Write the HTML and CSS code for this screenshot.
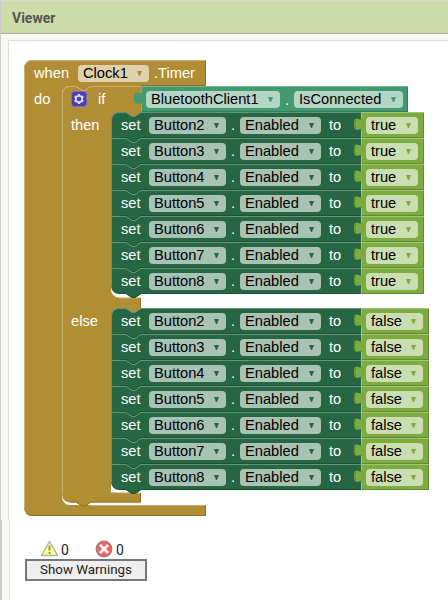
FILE: index.html
```html
<!DOCTYPE html>
<html lang="en">
<head>
<meta charset="utf-8">
<title>Viewer</title>
<link rel="stylesheet" href="styles.css">
</head>
<body>
<main class="viewer">
  <header class="viewer-title">Viewer</header>
  <section class="workspace">
    <div class="event-block">
      <svg class="block-shape" width="182" height="460" viewBox="24 60 182 460">
        <path class="gold" d="M32 60H206V86H91l-6 4h-3l-6-4H70a8 8 0 0 0-8 8V497a8 8 0 0 0 8 8H206V516H32a8 8 0 0 1-8-8V68a8 8 0 0 1 8-8z"/>
        <path class="gold" d="M62 94a8 8 0 0 1 8-8h6l6 4h3l6-4H141V112l-6 4h-3l-6-4h-7a8 8 0 0 0-8 8V284.500a8 8 0 0 0 8 8V297.500H141V308l-6 4h-3l-6-4h-7a8 8 0 0 0-8 8V492.500H141V502.500H91l-6 4h-3l-6-4H70a8 8 0 0 1-8-8z"/>
        <path class="gap" d="M111 284V289.500a8 8 0 0 0 8 8H141V293H119zM111 480V484.500a8 8 0 0 0 8 8H141V489H119z"/>
        <path class="edge-dark" d="M205.500 61V85.500H141M205.500 506V515.500H32a7.500 7.500 0 0 1-5.500-2.500M140.500 298V307.500M140.500 493V502H91l-6 4h-3l-6-4H70"/>
        <path class="edge-light" d="M24.500 508V68a7.500 7.500 0 0 1 7.500-7.500H205M62.500 494V94a7.500 7.500 0 0 1 7.500-7.500h6l6 4h3l6-4H141M119 298H140M119 493H140M91 505.500H205"/>
      </svg>
      <div class="event-row">
        <span class="label">when</span><span class="field clock">Clock1<i class="arrow"></i></span><span class="label timer">.Timer</span>
      </div>
      <div class="if-row">
        <span class="label do">do</span>
        <svg class="gear" width="16" height="16" viewBox="0 0 16 16"><rect x=".5" y=".5" width="15" height="15" rx="3" fill="#483fb5" stroke="#7770ca"/><path d="M8 3V13M3.700 5.500L12.300 10.500M3.700 10.500L12.300 5.500" stroke="#ddd8ee" stroke-width="2.200"/><circle cx="8" cy="8" r="3.200" fill="#483fb5" stroke="#ddd8ee" stroke-width="1.800"/></svg>
        <span class="label if">if</span>
        <div class="condition">
          <svg class="plug" width="8" height="26" viewBox="0 0 8 26"><path class="teal" d="M8 5C8 12 0 .5 0 12S8 13 8 20z"/></svg>
          <span class="field client">BluetoothClient1<i class="arrow"></i></span><span class="dot">.</span><span class="field connected">IsConnected<i class="arrow"></i></span>
        </div>
      </div>
      <div class="branch"><span class="label branch-name">then</span><div class="stack" data-value="true"></div></div>
      <div class="branch else"><span class="label branch-name">else</span><div class="stack" data-value="false"></div></div>
    </div>
    <div class="warnings">
      <div class="counts">
        <svg width="19" height="17" viewBox="0 0 19 17"><path d="M9.500 1.500L17.500 15.500H1.500z" fill="#ffff8c" stroke="#b5b5a8" stroke-width="1.500" stroke-linejoin="round"/><path d="M9.500 5.500V10.500M9.500 12V14" stroke="#999966" stroke-width="2"/></svg>
        <span class="count">0</span>
        <svg class="error" width="18" height="18" viewBox="0 0 18 18"><circle cx="9" cy="9" r="7.800" fill="#ff5c5c" stroke="#888" stroke-width="1.200"/><path d="M5 5L13 13M13 5L5 13" stroke="#fff" stroke-width="2.800"/></svg>
        <span class="count last">0</span>
      </div>
      <button class="show-warnings">Show Warnings</button>
    </div>
  </section>
</main>
<script src="blocks.js"></script>
</body>
</html>
```
FILE: styles.css
```css
* { box-sizing: border-box; }
body { margin: 0; background: #fff; overflow: hidden; }
.viewer { position: relative; height: 600px; border-left: 1px solid #ccc; border-top: 1px solid #d8d8d8; background: #f8f8f2; }
.viewer::after { content: ""; position: absolute; left: -1px; bottom: 0; width: 7px; height: 80px; background: #f8f8f2; border: solid #ccc; border-width: 0 1px 0 2px; border-right-color: #ddd; }
.viewer-title { height: 33px; padding: 0 11px; background: #cddca9; border-bottom: 1px solid #aaa; color: #555; font: bold 14px/34px Roboto, sans-serif; }
.workspace { height: 560px; margin: 6px 0 0 7px; padding: 19px 0 0 15px; background: #fff; border: solid #ddd; border-width: 1px 0 0 1px; }
.event-block { position: relative; width: 406px; height: 456px; color: #fff; font: 14.667px/26px "Liberation Sans", sans-serif; }
.block-shape { position: absolute; left: 0; top: 0; }
.gold { fill: #b18e35; }
.gap { fill: #fff; }
.edge-dark { fill: none; stroke: #8e722a; }
.edge-light { fill: none; stroke: #c8b072; }
.event-row, .if-row, .branch, .condition, .set-block, .value-block { position: relative; display: flex; }
.event-row, .if-row, .condition, .set-block, .value-block { height: 26px; }
.event-row { padding-left: 10px; }
.field { display: flex; flex: none; justify-content: space-between; align-items: center; height: 17px; margin-top: 5px; padding: 0 7px 0 5px; border-radius: 4px; color: #000; line-height: 17px; background: rgba(255, 255, 255, .6); }
.arrow { width: 5px; border: solid transparent; border-width: 5px 2.5px 0; border-top-color: #277048; }
.clock { width: 71px; margin-left: 9px; }
.clock .arrow { border-top-color: #b18e35; }
.timer { margin-left: 5px; }
.event-row .label:first-child { width: 35px; }
.do { width: 37px; padding-left: 10px; }
.gear { margin: 5px 0 0 10px; }
.if { width: 54px; padding-left: 11px; }
.condition { width: 267px; padding-left: 4px; background: #439970; border: solid #74b594; border-width: 1px 0 0 1px; box-shadow: inset -1px -1px #367a5a; }
.condition .field { margin-top: 4px; }
.condition .arrow { border-top-color: #439970; }
.plug { position: absolute; left: -8px; top: -1px; }
.teal { fill: #439970; }
.client { width: 134px; }
.connected { width: 109px; }
.dot { width: 14px; text-align: center; }
.branch-name { width: 87px; padding-left: 47px; }
.else { margin-top: 14px; }
.set-block { width: 250px; padding-left: 10px; }
.set-block > * { flex: none; }
.set-shape { position: absolute; left: 0; top: 0; overflow: visible; }
.green { fill: #266643; }
.green-dark { fill: none; stroke: #1e5236; }
.green-light { fill: none; stroke: #679479; }
.set-block .label, .set-block .field, .set-block .dot { position: relative; }
.set-name { width: 28px; }
.button-field { width: 77px; }
.property-field { width: 81px; }
.to { width: 40px; padding-left: 8px; }
.set-block .arrow { border-top-color: #266643; }
.value-block { width: 63px; padding-left: 4px; background: #7cac40; border: solid #a3c579; border-width: 1px 0 0 1px; box-shadow: inset -1px -1px #638a33; }
.false { width: 68px; }
.value-block .field { width: 52px; margin-top: 4px; }
.false .field { width: 57px; }
.set-block .value-block .arrow { border-top-color: #7cac40; }
.lime { fill: #7cac40; }
.plug-edge { fill: none; stroke: #638a33; }
.warnings { width: 122px; margin: 22px 0 0 1px; color: #222; font: 14px/18px Roboto, sans-serif; }
.counts { display: flex; height: 21px; padding: 2px 0 0 15px; }
.count { width: 16px; padding-left: 2px; line-height: 20px; }
.last { padding-left: 3px; }
.error { margin-left: 20px; }
.show-warnings { display: block; width: 122px; height: 22px; padding: 0; background: #eee; border: 2px solid #777; color: #222; font: 13.333px/18px Roboto, sans-serif; }
```
FILE: blocks.js
```js
const shape = (place) => `
  <svg class="set-shape" width="250" height="26" viewBox="0 0 250 26">
    <path class="green" d="M${place === 'first' ? '0 8a8 8 0 0 1 8-8' : '0 0'}H15l6 4h3l6-4H250V26H30l-6 4h-3l-6-4H${place === 'last' ? '8a8 8 0 0 1-8-8' : '0'}z"/>
    <path class="green-dark" d="M249.500 25.500H30l-6 4h-3l-6-4H8"/>
    <path class="green-light" d="M.5 ${place === 'last' ? 18 : 26}V${place === 'first' ? '8a7.500 7.500 0 0 1 7.500-7.500' : '.5'}H15l6 4h3l6-4H250"/>
  </svg>`;

document.querySelectorAll('.stack').forEach((stack) => {
  const value = stack.dataset.value;
  for (let n = 2; n <= 8; n++) {
    const place = n === 2 ? 'first' : n === 8 ? 'last' : '';
    stack.insertAdjacentHTML('beforeend', `
      <div class="set-block">${shape(place)}
        <span class="label set-name">set</span>
        <span class="field button-field">Button${n}<i class="arrow"></i></span>
        <span class="dot">.</span>
        <span class="field property-field">Enabled<i class="arrow"></i></span>
        <span class="label to">to</span>
        <div class="value-block ${value}">
          <svg class="plug" width="8" height="26" viewBox="0 0 8 26"><path class="lime" d="M8 5C8 12 0 .5 0 12S8 13 8 20z"/><path class="plug-edge" d="M1.500 16C.5 15 .5 10 1.500 8"/></svg>
          <span class="field">${value}<i class="arrow"></i></span>
        </div>
      </div>`);
  }
});
```
